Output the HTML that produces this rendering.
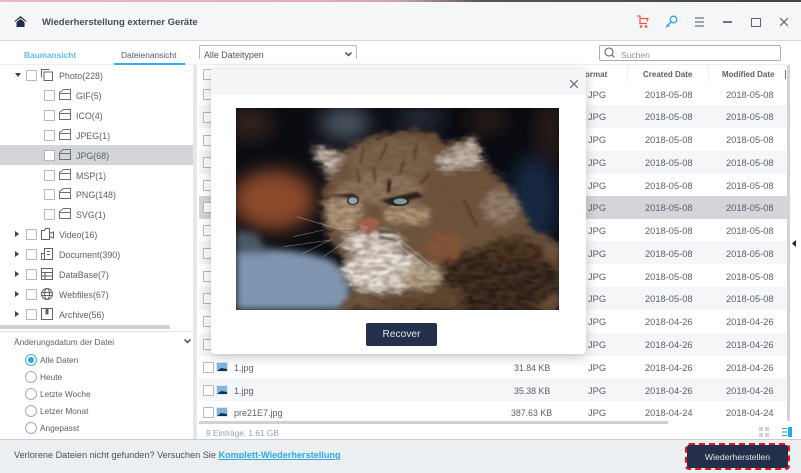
<!DOCTYPE html>
<html><head><meta charset="utf-8"><title>Wiederherstellung externer Geräte</title>
<style>
html,body{margin:0;padding:0;background:#fff}
#p{position:relative;width:801px;height:473px;overflow:hidden;background:#fff;font-family:"Liberation Sans",sans-serif;color:#5a606b;font-size:9.3px;filter:blur(.35px)}
#p div,#p svg.a{position:absolute}
.t{white-space:nowrap;line-height:12px;margin-top:1px}
.k{font-size:8.9px}
.cb{width:9px;height:9px;border:1px solid #b4b8bd;background:#fff;border-radius:1px}
.r{left:199px;width:588px;height:23px}
.z{background:#f5f6f8}
.rd{width:10px;height:10px;border:1px solid #a6aab1;border-radius:50%;left:25px;background:#fff}
</style></head><body><div id="p">
<div style="left:0;top:0;width:801px;height:2px;background:linear-gradient(90deg,#e9b7c6,#e7a9be 40%,#c9a3ac 50%,#555 60%,#444)"></div>
<div style="left:0;top:2px;width:801px;height:38px;background:#f5f6f8;border-bottom:1px solid #d4d7db"></div>
<svg class="a" style="left:14px;top:15px" width="13" height="13" viewBox="0 0 13 13" fill="#1f2d4a"><path d="M6.500 1L0 6.500h1.500L6.500 2.800l5 3.700H13z"/><path d="M2.500 7L6.500 4l4 3v5h-8z"/></svg>
<div class="t" style="left:42px;top:16px;font-size:9.500px;font-weight:bold;color:#474e5b">Wiederherstellung externer Geräte</div>
<svg class="a" style="left:636px;top:15px" width="13" height="13" viewBox="0 0 13 13" fill="none" stroke="#ee5544" stroke-width="1.200"><path d="M1 1h3v7.500h7M4 3.500h8l-1 3"/><circle cx="5" cy="11.500" r=".8"/><circle cx="10" cy="11.500" r=".8"/></svg>
<svg class="a" style="left:665px;top:15px" width="13" height="13" viewBox="0 0 13 13" fill="none" stroke="#2aa3e2" stroke-width="1.300"><circle cx="8.500" cy="4.500" r="3.300"/><path d="M6 7L1.500 11.500v1M3 10l1.500 1.500"/></svg>
<svg class="a" style="left:695px;top:17px" width="9" height="10" viewBox="0 0 9 10" stroke="#6d7480" stroke-width="1.200"><path d="M0 1h9M0 5h9M0 9h9"/></svg>
<div style="left:723px;top:21px;width:9px;height:2px;background:#6d7480"></div>
<div style="left:751px;top:18px;width:8px;height:7px;border:1.500px solid #5f6672"></div>
<svg class="a" style="left:780px;top:18px" width="8" height="8" viewBox="0 0 8 8" stroke="#5f6672" stroke-width="1.200"><path d="M0 0l8 8M8 0L0 8"/></svg>

<div style="left:0;top:64px;width:790px;height:1px;background:#eceef0"></div>
<div class="t" style="left:24px;top:48px;font-size:8.300px;font-weight:bold;color:#5bbdec">Baumansicht</div>
<div class="t" style="left:121px;top:48px;font-size:8.400px;color:#4f5663">Dateienansicht</div>
<div style="left:114px;top:63px;width:71px;height:2px;background:#35aee8"></div>
<div style="left:199px;top:45px;width:156px;height:13px;border:1px solid #b5b8bd;border-bottom:0;border-radius:2px 2px 0 0"></div>
<div class="t" style="left:204px;top:48px;font-size:8.900px;color:#4f5663">Alle Dateitypen</div>
<svg class="a" style="left:345px;top:52px" width="7" height="5" viewBox="0 0 7 5" fill="none" stroke="#444" stroke-width="1.400"><path d="M.5.500l3 3 3-3"/></svg>
<div style="left:599px;top:45px;width:180px;height:14px;border:1px solid #a9adb3;border-radius:2px"></div>
<svg class="a" style="left:604px;top:47px" width="11" height="11" viewBox="0 0 11 11" fill="none" stroke="#5b616c" stroke-width="1.100"><circle cx="5" cy="5" r="4"/><path d="M8 8l2.500 2.500"/></svg>
<div class="t" style="left:621px;top:48px;font-size:8.500px;color:#8b9098">Suchen</div>

<!-- tree -->
<div style="left:0;top:145px;width:193px;height:20px;background:#d3d5d8"></div>
<div style="left:193px;top:65px;width:4px;height:374px;background:#e6e7e9"></div>
<svg class="a" style="left:15px;top:73px" width="7" height="5" viewBox="0 0 7 5"><path d="M0 0h6L3 4z" fill="#3a3f49"/></svg>
<div class="cb" style="left:26px;top:70px"></div>
<svg class="a" style="left:41px;top:69px" width="12" height="12" viewBox="0 0 12 12" fill="none" stroke="#5d636e"><path d="M.5 8.500V.5h8M3 11.500V3h8.500v8.500z"/></svg>
<div class="t k" style="left:59px;top:69px">Photo(228)</div>

<div class="cb" style="left:44px;top:90px"></div><svg class="a" style="left:59px;top:89px" width="12" height="11" viewBox="0 0 12 11" fill="none" stroke="#6a707a"><path d="M.5 10.500V3.500l4-3h7v10zM.5 4.500h11"/></svg><div class="t k" style="left:76px;top:89px">GIF(5)</div>
<div class="cb" style="left:44px;top:110px"></div><svg class="a" style="left:59px;top:109px" width="12" height="11" viewBox="0 0 12 11" fill="none" stroke="#6a707a"><path d="M.5 10.500V3.500l4-3h7v10zM.5 4.500h11"/></svg><div class="t k" style="left:76px;top:109px">ICO(4)</div>
<div class="cb" style="left:44px;top:130px"></div><svg class="a" style="left:59px;top:129px" width="12" height="11" viewBox="0 0 12 11" fill="none" stroke="#6a707a"><path d="M.5 10.500V3.500l4-3h7v10zM.5 4.500h11"/></svg><div class="t k" style="left:76px;top:129px">JPEG(1)</div>
<div class="cb" style="left:44px;top:150px"></div><svg class="a" style="left:59px;top:149px" width="12" height="11" viewBox="0 0 12 11" fill="none" stroke="#6a707a"><path d="M.5 10.500V3.500l4-3h7v10zM.5 4.500h11"/></svg><div class="t k" style="left:76px;top:149px">JPG(68)</div>
<div class="cb" style="left:44px;top:170px"></div><svg class="a" style="left:59px;top:169px" width="12" height="11" viewBox="0 0 12 11" fill="none" stroke="#6a707a"><path d="M.5 10.500V3.500l4-3h7v10zM.5 4.500h11"/></svg><div class="t k" style="left:76px;top:169px">MSP(1)</div>
<div class="cb" style="left:44px;top:189px"></div><svg class="a" style="left:59px;top:188px" width="12" height="11" viewBox="0 0 12 11" fill="none" stroke="#6a707a"><path d="M.5 10.500V3.500l4-3h7v10zM.5 4.500h11"/></svg><div class="t k" style="left:76px;top:188px">PNG(148)</div>
<div class="cb" style="left:44px;top:209px"></div><svg class="a" style="left:59px;top:208px" width="12" height="11" viewBox="0 0 12 11" fill="none" stroke="#6a707a"><path d="M.5 10.500V3.500l4-3h7v10zM.5 4.500h11"/></svg><div class="t k" style="left:76px;top:208px">SVG(1)</div>

<svg class="a" style="left:15px;top:231px" width="5" height="7" viewBox="0 0 5 7"><path d="M0 0v6l4-3z" fill="#3a3f49"/></svg>
<div class="cb" style="left:26px;top:229px"></div>
<svg class="a" style="left:41px;top:228px" width="13" height="12" viewBox="0 0 13 12" fill="none" stroke="#5d636e"><path d="M.5 11.500V2.500h3l1-2h4v11zM8.500 5.500l4-1.500v6l-4-1.500"/></svg>
<div class="t k" style="left:59px;top:228px">Video(16)</div>
<svg class="a" style="left:15px;top:251px" width="5" height="7" viewBox="0 0 5 7"><path d="M0 0v6l4-3z" fill="#3a3f49"/></svg>
<div class="cb" style="left:26px;top:249px"></div>
<svg class="a" style="left:41px;top:248px" width="12" height="12" viewBox="0 0 12 12" fill="none" stroke="#5d636e"><path d="M.5 11.500V5.500h3M3.500 11.500V.5h8v11zM6 3.500h3M6 6.500h3M.5 11.500h11"/></svg>
<div class="t k" style="left:59px;top:248px">Document(390)</div>
<svg class="a" style="left:15px;top:271px" width="5" height="7" viewBox="0 0 5 7"><path d="M0 0v6l4-3z" fill="#3a3f49"/></svg>
<div class="cb" style="left:26px;top:269px"></div>
<svg class="a" style="left:41px;top:268px" width="12" height="12" viewBox="0 0 12 12" fill="none" stroke="#5d636e"><path d="M.5.500h11v11H.5zM.5 4.500h11M.5 8h11M4 4.500v7"/></svg>
<div class="t k" style="left:59px;top:268px">DataBase(7)</div>
<svg class="a" style="left:15px;top:291px" width="5" height="7" viewBox="0 0 5 7"><path d="M0 0v6l4-3z" fill="#3a3f49"/></svg>
<div class="cb" style="left:26px;top:289px"></div>
<svg class="a" style="left:41px;top:288px" width="12" height="12" viewBox="0 0 12 12" fill="none" stroke="#5d636e"><circle cx="6" cy="6" r="5.500"/><ellipse cx="6" cy="6" rx="2.500" ry="5.500"/><path d="M.5 4.500h11M.5 7.500h11"/></svg>
<div class="t k" style="left:59px;top:288px">Webfiles(67)</div>
<svg class="a" style="left:15px;top:311px" width="5" height="7" viewBox="0 0 5 7"><path d="M0 0v6l4-3z" fill="#3a3f49"/></svg>
<div class="cb" style="left:26px;top:309px"></div>
<svg class="a" style="left:41px;top:308px" width="12" height="12" viewBox="0 0 12 12" fill="none" stroke="#5d636e"><path d="M.5.500h11v11H.5z"/><path d="M5 1h2v5H5z" fill="#5d636e"/></svg>
<div class="t k" style="left:59px;top:308px">Archive(56)</div>

<div style="left:0;top:325px;width:170px;height:4px;background:#cfd1d4"></div>
<div style="left:0;top:331px;width:193px;height:1px;background:#e4e6e8"></div>
<div class="t" style="left:14px;top:335px;font-size:8.400px">Änderungsdatum der Datei</div>
<svg class="a" style="left:184px;top:339px" width="7" height="5" viewBox="0 0 7 5" fill="none" stroke="#444" stroke-width="1.400"><path d="M.5.500l3 3 3-3"/></svg>
<div class="rd" style="top:354px;border-color:#35aee8"></div><div style="left:28px;top:357px;width:6px;height:6px;border-radius:50%;background:#2ba6e6"></div>
<div class="t" style="left:40px;top:353px;font-size:8.300px">Alle Daten</div>
<div class="rd" style="top:371px"></div><div class="t" style="left:40px;top:370px;font-size:8.300px">Heute</div>
<div class="rd" style="top:388px"></div><div class="t" style="left:40px;top:387px;font-size:8.300px">Letzte Woche</div>
<div class="rd" style="top:405px"></div><div class="t" style="left:40px;top:404px;font-size:8.300px">Letzer Monat</div>
<div class="rd" style="top:422px"></div><div class="t" style="left:40px;top:421px;font-size:8.300px">Angepasst</div>

<!-- table -->
<div class="t" style="left:585px;top:68px;font-size:8px;font-weight:bold;color:#5a606b">ormat</div>
<div class="t" style="left:643px;top:68px;font-size:8px;font-weight:bold;color:#5a606b">Created Date</div>
<div class="t" style="left:722px;top:68px;font-size:8px;font-weight:bold;color:#5a606b">Modified Date</div>
<div style="left:627px;top:66px;width:1px;height:16px;background:#eceef0"></div>
<div style="left:708px;top:66px;width:1px;height:16px;background:#eceef0"></div>
<div style="left:785px;top:70px;width:1px;height:9px;background:#777"></div>
<div style="left:787px;top:65px;width:3px;height:356px;background:#d2d3d6"></div>

<div class="r z" style="top:105px"></div>
<div class="r z" style="top:151px"></div>
<div class="r" style="top:196px;background:#d3d5d8"></div>
<div class="r z" style="top:241px"></div>
<div class="r z" style="top:287px"></div>
<div class="r z" style="top:333px"></div>
<div class="r z" style="top:378px"></div>

<div class="cb" style="left:203px;top:69px"></div>
<div class="cb" style="left:203px;top:89px"></div>
<div class="cb" style="left:203px;top:112px"></div>
<div class="cb" style="left:203px;top:135px"></div>
<div class="cb" style="left:203px;top:157px"></div>
<div class="cb" style="left:203px;top:180px"></div>
<div class="cb" style="left:203px;top:202px"></div>
<div class="cb" style="left:203px;top:225px"></div>
<div class="cb" style="left:203px;top:248px"></div>
<div class="cb" style="left:203px;top:271px"></div>
<div class="cb" style="left:203px;top:293px"></div>
<div class="cb" style="left:203px;top:316px"></div>
<div class="cb" style="left:203px;top:339px"></div>
<div class="cb" style="left:203px;top:362px"></div>
<div class="cb" style="left:203px;top:385px"></div>
<div class="cb" style="left:203px;top:407px"></div>

<div class="t" style="left:588px;top:88px">JPG</div><div class="t" style="left:645px;top:88px">2018-05-08</div><div class="t" style="left:726px;top:88px">2018-05-08</div>
<div class="t" style="left:588px;top:110px">JPG</div><div class="t" style="left:645px;top:110px">2018-05-08</div><div class="t" style="left:726px;top:110px">2018-05-08</div>
<div class="t" style="left:588px;top:133px">JPG</div><div class="t" style="left:645px;top:133px">2018-05-08</div><div class="t" style="left:726px;top:133px">2018-05-08</div>
<div class="t" style="left:588px;top:156px">JPG</div><div class="t" style="left:645px;top:156px">2018-05-08</div><div class="t" style="left:726px;top:156px">2018-05-08</div>
<div class="t" style="left:588px;top:179px">JPG</div><div class="t" style="left:645px;top:179px">2018-05-08</div><div class="t" style="left:726px;top:179px">2018-05-08</div>
<div class="t" style="left:588px;top:201px">JPG</div><div class="t" style="left:645px;top:201px">2018-05-08</div><div class="t" style="left:726px;top:201px">2018-05-08</div>
<div class="t" style="left:588px;top:224px">JPG</div><div class="t" style="left:645px;top:224px">2018-05-08</div><div class="t" style="left:726px;top:224px">2018-05-08</div>
<div class="t" style="left:588px;top:247px">JPG</div><div class="t" style="left:645px;top:247px">2018-05-08</div><div class="t" style="left:726px;top:247px">2018-05-08</div>
<div class="t" style="left:588px;top:270px">JPG</div><div class="t" style="left:645px;top:270px">2018-05-08</div><div class="t" style="left:726px;top:270px">2018-05-08</div>
<div class="t" style="left:588px;top:292px">JPG</div><div class="t" style="left:645px;top:292px">2018-05-08</div><div class="t" style="left:726px;top:292px">2018-05-08</div>
<div class="t" style="left:588px;top:315px">JPG</div><div class="t" style="left:645px;top:315px">2018-04-26</div><div class="t" style="left:726px;top:315px">2018-04-26</div>
<div class="t" style="left:588px;top:338px">JPG</div><div class="t" style="left:645px;top:338px">2018-04-26</div><div class="t" style="left:726px;top:338px">2018-04-26</div>
<div class="t" style="left:588px;top:361px">JPG</div><div class="t" style="left:645px;top:361px">2018-04-26</div><div class="t" style="left:726px;top:361px">2018-04-26</div>
<div class="t" style="left:588px;top:384px">JPG</div><div class="t" style="left:645px;top:384px">2018-04-26</div><div class="t" style="left:726px;top:384px">2018-04-26</div>
<div class="t" style="left:588px;top:406px">JPG</div><div class="t" style="left:645px;top:406px">2018-04-24</div><div class="t" style="left:726px;top:406px">2018-04-24</div>

<div class="t" style="left:514px;top:361px;font-size:8.800px">31.84 KB</div>
<div class="t" style="left:514px;top:384px;font-size:8.800px">35.38 KB</div>
<div class="t" style="left:511px;top:406px;font-size:8.800px">387.63 KB</div>
<svg class="a" style="left:216px;top:362px" width="12" height="10" viewBox="0 0 12 10"><rect width="12" height="10" fill="#dfe7ef"/><rect x="1" y="1" width="10" height="8" fill="#7fb6e0"/><path d="M1 9l4-3 6 1v2z" fill="#16324f"/></svg>
<svg class="a" style="left:216px;top:385px" width="12" height="10" viewBox="0 0 12 10"><rect width="12" height="10" fill="#dfe7ef"/><rect x="1" y="1" width="10" height="8" fill="#7fb6e0"/><path d="M1 9l4-3 6 1v2z" fill="#16324f"/></svg>
<svg class="a" style="left:216px;top:407px" width="12" height="10" viewBox="0 0 12 10"><rect width="12" height="10" fill="#dfe7ef"/><rect x="1" y="1" width="10" height="8" fill="#7fb6e0"/><path d="M1 9l4-3 6 1v2z" fill="#16324f"/></svg>
<div class="t" style="left:234px;top:361px;font-size:9px">1.jpg</div>
<div class="t" style="left:234px;top:384px;font-size:9px">1.jpg</div>
<div class="t" style="left:234px;top:406px;font-size:9px">pre21E7.jpg</div>

<div style="left:199px;top:421px;width:469px;height:3px;background:#cfd1d4"></div>
<div class="t" style="left:206px;top:426px;font-size:8.300px;color:#9a9ea5">9 Einträge, 1.61 GB</div>
<svg class="a" style="left:759px;top:427px" width="10" height="10" viewBox="0 0 10 10" fill="#ccd2d8"><path d="M0 0h4v4H0zM6 0h4v4H6zM0 6h4v4H0zM6 6h4v4H6z"/></svg>
<svg class="a" style="left:782px;top:427px" width="10" height="10" viewBox="0 0 10 10" fill="#22a9e9"><path d="M6 0h4v10H6zM0 1h5v1H0zM0 4.500h5v1H0zM0 8h5v1H0z"/></svg>
<svg class="a" style="left:792px;top:240px" width="5" height="7" viewBox="0 0 5 7"><path d="M4 0v7L0 3.500z" fill="#222"/></svg>

<!-- footer -->
<div style="left:0;top:439px;width:801px;height:34px;background:#eceff1;border-top:1px solid #c9cdd1;box-sizing:border-box"></div>
<div class="t" style="left:14px;top:448px;font-size:9.150px;color:#4a505b">Verlorene Dateien nicht gefunden? Versuchen Sie <b style="color:#2aa9e6;text-decoration:underline">Komplett-Wiederherstellung</b></div>
<div style="left:687px;top:445px;width:101px;height:23px;background:#232f4b;outline:2px dashed #f0101c;border-radius:2px"></div>
<div class="t" style="left:687px;top:450px;width:101px;text-align:center;font-size:8.700px;color:#e3e6ec">Wiederherstellen</div>

<!-- modal -->
<div style="left:211px;top:69px;width:375px;height:285px;background:#fff;border-radius:0 0 4px 4px;box-shadow:0 3px 12px rgba(0,0,0,.22)"></div>
<div style="left:211px;top:69px;width:375px;height:26px;background:#f4f5f7"></div>
<svg class="a" style="left:570px;top:80px" width="8" height="8" viewBox="0 0 8 8" stroke="#666c76" stroke-width="1.200"><path d="M0 0l8 8M8 0L0 8"/></svg>
<svg class="a" style="left:236px;top:108px" width="323" height="202" viewBox="18 24 967 606" preserveAspectRatio="none">
<defs>
<filter id="b1" x="-40%" y="-40%" width="180%" height="180%"><feGaussianBlur stdDeviation="28"/></filter>
<filter id="b2" x="-20%" y="-20%" width="140%" height="140%"><feGaussianBlur stdDeviation="11"/></filter>
<filter id="f" x="-5%" y="-5%" width="110%" height="110%"><feGaussianBlur stdDeviation="10" result="s"/><feTurbulence type="fractalNoise" baseFrequency="0.03 0.06" numOctaves="3" seed="4" result="n"/><feDisplacementMap in="s" in2="n" scale="30" xChannelSelector="R" yChannelSelector="G"/></filter>
<filter id="e" x="-10%" y="-10%" width="120%" height="120%"><feGaussianBlur stdDeviation="3.500"/></filter>
<filter id="n" x="0" y="0" width="100%" height="100%"><feTurbulence type="fractalNoise" baseFrequency="0.035 0.08" numOctaves="2" seed="9"/><feColorMatrix values="0 0 0 0 .13  0 0 0 0 .08  0 0 0 0 .04  1.800 1.800 0 0 -1.300"/><feGaussianBlur stdDeviation="2"/></filter>
<clipPath id="c"><rect x="18" y="24" width="967" height="606"/></clipPath>
<clipPath id="cat"><path d="M240 135L335 158C400 110 500 85 600 95L640 130 735 110 760 190C830 250 880 320 900 385L985 430V630H320L370 570 340 480 290 400 275 300 295 235z"/></clipPath>
</defs>
<g clip-path="url(#c)">
<rect x="18" y="24" width="967" height="606" fill="#0b0c12"/>
<g filter="url(#b1)">
<ellipse cx="60" cy="70" rx="70" ry="50" fill="#33221a"/>
<ellipse cx="345" cy="70" rx="75" ry="50" fill="#49525f"/>
<ellipse cx="570" cy="55" rx="70" ry="30" fill="#2c323d"/>
<ellipse cx="770" cy="60" rx="60" ry="35" fill="#2a1d18"/>
<ellipse cx="960" cy="90" rx="40" ry="90" fill="#2a1a15"/>
<ellipse cx="910" cy="300" rx="75" ry="130" fill="#12253f"/>
<ellipse cx="130" cy="300" rx="125" ry="90" fill="#8a4a2a"/>
</g>
<g filter="url(#b2)">
<path d="M18 450C90 440 250 450 320 490L370 590 340 630H18z" fill="#8095b0"/>
<path d="M18 390l60 10 40 60H18z" fill="#4e5866"/>
</g>
<g filter="url(#f)">
<path d="M240 135L335 158C400 110 500 85 600 95L640 130 735 110 760 190C830 250 880 320 900 385L985 430V630H320L370 570 340 480 290 400 275 300 295 235z" fill="#70533d"/>
<ellipse cx="800" cy="540" rx="190" ry="100" fill="#2a1c13"/>
<ellipse cx="850" cy="450" rx="90" ry="40" fill="#3a2819"/>
<ellipse cx="560" cy="590" rx="140" ry="40" fill="#5c4029"/>
<ellipse cx="480" cy="180" rx="130" ry="70" fill="#7c634c"/>
<ellipse cx="450" cy="270" rx="130" ry="45" fill="#8f7660"/>
<path d="M245 140l95 25-45 70z" fill="#d0c2b8"/>
<path d="M735 112l-115 65 25 35 115-25z" fill="#cfc2b8"/>
<ellipse cx="810" cy="320" rx="55" ry="50" fill="#94806e"/>
<ellipse cx="340" cy="340" rx="55" ry="55" fill="#b49a80"/>
<ellipse cx="530" cy="345" rx="70" ry="26" fill="#bba082"/>
<ellipse cx="640" cy="440" rx="55" ry="45" fill="#8a5538"/>
<ellipse cx="430" cy="430" rx="90" ry="38" fill="#e6dfd8"/>
<ellipse cx="460" cy="515" rx="125" ry="60" fill="#efeae4"/>
<ellipse cx="570" cy="530" rx="65" ry="38" fill="#c2b097"/>
</g>
<g clip-path="url(#cat)">
<rect x="18" y="24" width="967" height="606" filter="url(#n)" opacity=".45"/>
</g>
<g filter="url(#e)">
<path d="M378 365l40-15 35 15-40 45z" fill="#9c6049"/>
<path d="M300 285l70-5 20 15-40-2zM450 300l110-25 20 15-100 25z" fill="#2f241c"/>
<path d="M478 240l-4 38" stroke="#2a1e16" stroke-width="9" fill="none"/>
<path d="M445 395l55 2M445 410l55 12" stroke="#33261d" stroke-width="5" fill="none"/>
<path d="M380 210l8 40M430 200l5 50M520 180l-10 40M600 220l-30 30M400 140l-10 50M470 130l-20 50M560 130l-10 50M700 300l40 80" stroke="#43301f" stroke-width="6" fill="none" opacity=".7"/>
</g>
<path d="M384 372l30 7-10 28z" fill="#b4736a" opacity=".9"/>
<ellipse cx="368" cy="302" rx="18" ry="13" fill="#3c3028"/><ellipse cx="368" cy="302" rx="13" ry="10" fill="#8fa6ae"/>
<ellipse cx="505" cy="305" rx="32" ry="13" fill="#2a2420"/><ellipse cx="510" cy="304" rx="20" ry="9" fill="#7e98a6"/>
<g fill="none" stroke="#d8d4cc" stroke-width="1.800" opacity=".55">
<path d="M200 350l120 35h40M190 410l90-20M160 440l140-20M215 462l90-45M280 470l70-50M510 420l100 80M510 440l80 60M640 190l120-8M620 210l130 0"/>
</g>
</g>
</svg>
<div style="left:366px;top:323px;width:71px;height:23px;background:#232f4b;border-radius:2px"></div>
<div class="t" style="left:366px;top:328px;width:71px;text-align:center;font-size:10.200px;color:#dfe3ea">Recover</div>
</div></body></html>
